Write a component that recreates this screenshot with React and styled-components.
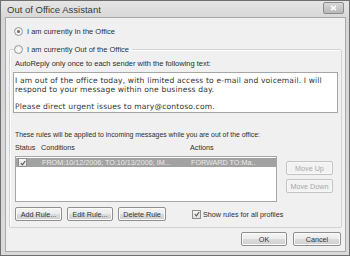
import React from "react"
import styled, { createGlobalStyle } from "styled-components"

const GlobalStyle = createGlobalStyle`
  html, body {
    margin: 0;
    padding: 0;
    background: #ffffff;
  }
  body {
    font-family: "Liberation Sans", Arial, sans-serif;
    color: #2e2e2e;
  }
`

const Window = styled.div`
  width: 350px;
  height: 256px;
  box-sizing: border-box;
  border: 1px solid #6f6f6f;
  background: linear-gradient(#e6e6e6, #d6d6d6 18px, #dadada);
  display: flex;
  flex-direction: column;
  padding: 0 3px 3px 4px;
`
const TitleBar = styled.div`
  height: 16px;
  display: flex;
  align-items: center;
  justify-content: space-between;
  padding: 0 2px 0 2px;
`
const Title = styled.span`
  font-size: 9.5px;
  color: #3a3a3a;
`
const CloseButton = styled.div`
  width: 19px;
  height: 10px;
  margin-top: -2px;
  border: 1px solid #8c8c8c;
  border-radius: 2px;
  background: linear-gradient(#d8d8d8, #b8b8b8);
  display: flex;
  align-items: center;
  justify-content: center;
`
const Client = styled.div`
  flex: 1;
  border: 1px solid #a9a9a9;
  background: #f0f0f0;
  display: flex;
  flex-direction: column;
  padding: 8px 3px 4px 3px;
`
const OptionRow = styled.label`
  height: 10px;
  display: flex;
  align-items: center;
  gap: 4px;
  font-size: 7.5px;
  padding-left: ${p => p.$indent || 0}px;
`
const Radio = styled.span`
  width: 7px;
  height: 7px;
  border-radius: 50%;
  border: 1px solid #9a9a9a;
  background: radial-gradient(circle, #ffffff, #e2e2e2);
  display: flex;
  align-items: center;
  justify-content: center;
  &::after {
    content: "";
    width: 3px;
    height: 3px;
    border-radius: 50%;
    background: ${p => (p.$checked ? "#6a6a6a" : "transparent")};
  }
`
const Group = styled.fieldset`
  margin: 8px 0 0 0;
  border: 1px solid #d2d2d2;
  box-shadow: inset 1px 1px 0 #ffffff;
  border-radius: 2px;
  padding: 4px 3px 6px 3px;
  display: flex;
  flex-direction: column;
  min-width: 0;
`
const Legend = styled.legend`
  padding: 0 3px 0 0;
  margin-left: 1px;
`
const Text = styled.div`
  height: 10px;
  display: flex;
  align-items: center;
  font-size: ${p => p.$size || 7.2}px;
  padding-left: 2px;
  margin-top: ${p => p.$mt || 0}px;
  white-space: nowrap;
`
const MessageBox = styled.div`
  margin-top: 4px;
  height: 41px;
  box-sizing: border-box;
  border: 1px solid #a6a6a6;
  background: #ffffff;
  padding: 4px 1px 0 1px;
  font-family: "DejaVu Sans", Verdana, sans-serif;
  font-size: 7.6px;
  line-height: 8.6px;
  letter-spacing: 0.15px;
  white-space: nowrap;
  overflow: hidden;
  color: #333;
`
const Headers = styled.div`
  margin-top: 3px;
  height: 10px;
  display: grid;
  grid-template-columns: 26px 149px 1fr;
  align-items: center;
  font-size: 7.2px;
  padding-left: 2px;
`
const RulesArea = styled.div`
  margin-top: 4px;
  display: flex;
  padding-left: 2px;
  gap: 9px;
`
const RuleList = styled.div`
  width: 262px;
  height: 46px;
  box-sizing: border-box;
  border: 1px solid #a6a6a6;
  background: #ffffff;
  padding: 1px 0 0 0;
`
const RuleRow = styled.div`
  height: 9px;
  display: grid;
  grid-template-columns: 26px 149px 1fr;
  align-items: center;
  background: ${p => (p.$selected ? "#a2a2a2" : "transparent")};
  color: ${p => (p.$selected ? "#ececec" : "#333")};
  font-size: 7.2px;
  white-space: nowrap;
  overflow: hidden;
`
const CheckBox = styled.span`
  width: 7px;
  height: 7px;
  border: 1px solid #8e8e8e;
  background: linear-gradient(#f6f6f6, #e0e0e0);
  margin-left: ${p => p.$ml || 0}px;
  display: flex;
  align-items: center;
  justify-content: center;
`
const SideButtons = styled.div`
  display: flex;
  flex-direction: column;
  gap: 4px;
  padding-top: 5px;
`
const Button = styled.div`
  width: ${p => p.$w}px;
  height: 14px;
  box-sizing: border-box;
  border: 1px solid ${p => (p.$disabled ? "#c4c4c4" : "#8f8f8f")};
  border-radius: 2px;
  background: ${p =>
    p.$disabled
      ? "#f2f2f2"
      : "linear-gradient(#f4f4f4 0%, #ebebeb 50%, #dcdcdc 51%, #cfcfcf 100%)"};
  box-shadow: inset 0 0 0 1px ${p => (p.$disabled ? "#f7f7f7" : "#fbfbfb")};
  color: ${p => (p.$disabled ? "#a8a8a8" : "#333")};
  font-size: 7.2px;
  display: flex;
  align-items: center;
  justify-content: center;
  white-space: nowrap;
`
const ButtonRow = styled.div`
  margin-top: 5px;
  display: flex;
  align-items: center;
  gap: 5px;
  padding-left: 2px;
`
const ProfilesOption = styled.label`
  margin-left: 21px;
  display: flex;
  align-items: center;
  gap: 2px;
  font-size: 7.2px;
  white-space: nowrap;
`
const Footer = styled.div`
  margin-top: 4px;
  display: flex;
  justify-content: flex-end;
  gap: 6px;
  padding-right: 1px;
`

const Check = () => (
  <svg width="6" height="6" viewBox="0 0 6 6">
    <path d="M0.8 3.2 L2.4 4.8 L5.2 1" fill="none" stroke="#555" strokeWidth="1.1" />
  </svg>
)

const OutOfOfficeAssistant = () => {
  return (
    <Window>
      <TitleBar>
        <Title>Out of Office Assistant</Title>
        <CloseButton>
          <svg width="7" height="6" viewBox="0 0 7 6">
            <path d="M1 0.8 L6 5.2 M6 0.8 L1 5.2" stroke="#ffffff" strokeWidth="1.6" />
          </svg>
        </CloseButton>
      </TitleBar>
      <Client>
        <OptionRow $indent={5}>
          <Radio $checked />
          I am currently In the Office
        </OptionRow>
        <Group>
          <Legend>
            <OptionRow>
              <Radio />
              I am currently Out of the Office
            </OptionRow>
          </Legend>
          <Text $size={7.5}>AutoReply only once to each sender with the following text:</Text>
          <MessageBox>
            I am out of the office today, with limited access to e-mail and voicemail. I will
            <br />
            respond to your message within one business day.
            <br />
            <br />
            Please direct urgent issues to mary@contoso.com.
          </MessageBox>
          <Text $mt={16} $size={6.9}>
            These rules will be applied to incoming messages while you are out of the office:
          </Text>
          <Headers>
            <span>Status</span>
            <span>Conditions</span>
            <span>Actions</span>
          </Headers>
          <RulesArea>
            <RuleList>
              <RuleRow $selected>
                <CheckBox $ml={2}>
                  <Check />
                </CheckBox>
                <span>FROM:10/12/2006; TO:10/13/2006; IM...</span>
                <span>FORWARD TO:Ma..</span>
              </RuleRow>
            </RuleList>
            <SideButtons>
              <Button $w={47} $disabled>Move Up</Button>
              <Button $w={47} $disabled>Move Down</Button>
            </SideButtons>
          </RulesArea>
          <ButtonRow>
            <Button $w={47}>Add Rule...</Button>
            <Button $w={46}>Edit Rule...</Button>
            <Button $w={48}>Delete Rule</Button>
            <ProfilesOption>
              <CheckBox>
                <Check />
              </CheckBox>
              Show rules for all profiles
            </ProfilesOption>
          </ButtonRow>
        </Group>
        <Footer>
          <Button $w={46}>OK</Button>
          <Button $w={48}>Cancel</Button>
        </Footer>
      </Client>
    </Window>
  )
}

export default function App() {
  return (
    <>
      <GlobalStyle />
      <OutOfOfficeAssistant />
    </>
  )
}
